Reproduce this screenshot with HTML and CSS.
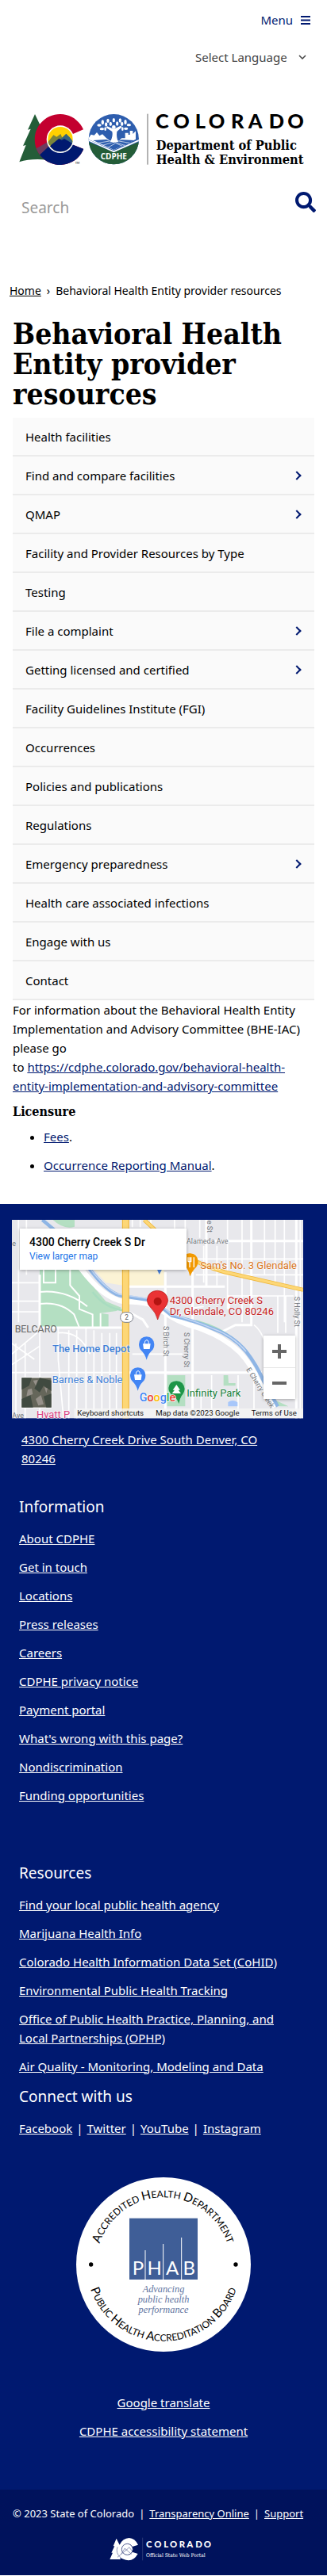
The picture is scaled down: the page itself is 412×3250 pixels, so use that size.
FILE: index.html
```html
<!DOCTYPE html>
<html lang="en">
<head>
<meta charset="utf-8">
<meta name="viewport" content="width=device-width, initial-scale=1">
<title>Behavioral Health Entity provider resources</title>
<link rel="stylesheet" href="styles.css">
</head>
<body>
<header class="site-header">
  <button class="menu-button" type="button">Menu
    <svg class="menu-icon" viewBox="0 0 12 11" aria-hidden="true"><path d="M0 1h12M0 5.500h12M0 10h12" stroke="currentColor" stroke-width="1.900"/></svg>
  </button>
  <div class="language">
    <select class="language-select" aria-label="Select Language"><option>Select Language</option></select>
    <svg class="language-icon" viewBox="0 0 10 6" aria-hidden="true"><path d="M1 1l4 4 4-4" fill="none" stroke="currentColor" stroke-width="1.500"/></svg>
  </div>
  <a class="brand" href="#" aria-label="Colorado Department of Public Health and Environment">
    <svg class="brand-logo" viewBox="75 430 1095 202">
      <defs>
        <clipPath id="c-shape"><path d="M318 491A96 96 0 1 0 319 565L272 546A44 44 0 1 1 272 511Z"/></clipPath>
        <clipPath id="c-core"><circle cx="231" cy="528" r="47"/></clipPath>
        <clipPath id="seal"><circle cx="433" cy="528" r="95"/></clipPath>
      </defs>
      <path fill="#245d38" d="M135 433L108 492L119 489L90 553L101 550L76 614Q120 600 180 606L180 505L162 490Z"/>
      <g clip-path="url(#c-shape)">
        <rect x="130" y="430" width="195" height="200" fill="#c3002f"/>
        <path fill="#6d3a5d" d="M130 568L184 538L200 565L150 605L130 600Z"/>
        <path fill="#001970" d="M152 588L195 548L330 538V630H152Z"/>
      </g>
      <circle cx="231" cy="528" r="52" fill="#fff"/>
      <g clip-path="url(#c-core)">
        <rect x="180" y="475" width="102" height="106" fill="#ffd100"/>
        <path fill="#7a853b" d="M175 550L205 512L217 519L232 508L250 550Z"/>
        <path fill="#35647e" d="M218 540L253 507L266 520L290 550V580H200Z"/>
        <path fill="#001970" d="M178 565L226 525L236 531L246 526L286 550V582H178Z"/>
      </g>
      <text x="287" y="621" font-family="Lato" font-size="11">TM</text>
      <g clip-path="url(#seal)">
        <rect x="335" y="430" width="196" height="198" fill="#2e5eae"/>
        <path fill="#fff" d="M335 528L347 510L359 513L369 502L379 515L390 509L405 524L420 535L452 535L463 524H476V504H488V511H494V496H505V508L516 497V528L433 569Z"/>
        <path fill="#2e5eae" d="M355 532L405 529L433 541L463 530L510 532L433 568Z"/>
        <path stroke="#fff" stroke-width="2" fill="none" d="M375 542L435 532L492 542M390 551L436 538L476 552M410 560L440 543L464 553"/>
        <path fill="#245d38" d="M335 537L433 577L531 537V628H335Z"/>
        <path d="M336 531L433 575L530 531" fill="none" stroke="#fff" stroke-width="5"/>
        <path fill="#fff" d="M420 538Q431 515 427 499L404 484L408 479L429 488H437L459 477L464 482L445 499Q442 521 450 538Z"/>
        <circle cx="433" cy="482" r="7" fill="#fff"/>
        <g fill="#fff">
          <ellipse cx="378" cy="475" rx="8" ry="5"/><ellipse cx="388" cy="489" rx="8" ry="5"/><ellipse cx="391" cy="464" rx="5" ry="9"/><ellipse cx="404" cy="472" rx="5" ry="8"/><ellipse cx="411" cy="458" rx="5" ry="8"/><ellipse cx="421" cy="470" rx="5" ry="8"/><ellipse cx="433" cy="456" rx="5" ry="8"/><ellipse cx="446" cy="469" rx="5" ry="8"/><ellipse cx="457" cy="457" rx="5" ry="8"/><ellipse cx="464" cy="470" rx="5" ry="8"/><ellipse cx="477" cy="463" rx="5" ry="9"/><ellipse cx="490" cy="474" rx="8" ry="5"/><ellipse cx="479" cy="488" rx="8" ry="5"/><ellipse cx="401" cy="489" rx="4" ry="7"/><ellipse cx="466" cy="489" rx="4" ry="7"/>
        </g>
        <text x="433" y="603" text-anchor="middle" font-family="Open Sans" font-weight="700" font-size="30" fill="#fff">CDPHE</text>
      </g>
      <path d="M561 432V624" stroke="#666" stroke-width="3"/>
      <text class="logo-word" font-size="76" y="487" x="591 658 740 791 876 941 1019 1090">COLORADO</text>
      <text class="logo-slab" font-size="49" x="593" y="568">Department of Public</text>
      <text class="logo-slab" font-size="49" x="593" y="622">Health &amp; Environment</text>
    </svg>
  </a>
  <form class="search">
    <input class="search-input" type="search" placeholder="Search" aria-label="Search">
    <button class="search-button" type="submit" aria-label="Search">
      <svg class="search-icon" viewBox="0 0 512 512"><path fill="currentColor" d="M505 442.700L405.300 343c-4.500-4.500-10.600-7-17-7H372c27.600-35.300 44-79.700 44-128C416 93.100 322.900 0 208 0S0 93.100 0 208s93.100 208 208 208c48.300 0 92.700-16.400 128-44v16.300c0 6.400 2.500 12.500 7 17l99.700 99.700c9.400 9.400 24.600 9.400 33.900 0l28.300-28.300c9.400-9.400 9.400-24.600.1-34zM208 336c-70.700 0-128-57.200-128-128 0-70.700 57.200-128 128-128 70.700 0 128 57.200 128 128 0 70.700-57.200 128-128 128z"/></svg>
    </button>
  </form>
</header>

<nav class="breadcrumb" aria-label="Breadcrumb"><a href="#">Home</a><span>›</span><span>Behavioral Health Entity provider resources</span></nav>

<main class="content">
  <h1 class="page-title">Behavioral Health Entity provider resources</h1>
  <nav aria-label="Section">
    <ul class="side-menu">
      <li><a href="#">Health facilities</a></li>
      <li class="has-children"><a href="#">Find and compare facilities</a></li>
      <li class="has-children"><a href="#">QMAP</a></li>
      <li><a href="#">Facility and Provider Resources by Type</a></li>
      <li><a href="#">Testing</a></li>
      <li class="has-children"><a href="#">File a complaint</a></li>
      <li class="has-children"><a href="#">Getting licensed and certified</a></li>
      <li><a href="#">Facility Guidelines Institute (FGI)</a></li>
      <li><a href="#">Occurrences</a></li>
      <li><a href="#">Policies and publications</a></li>
      <li><a href="#">Regulations</a></li>
      <li class="has-children"><a href="#">Emergency preparedness</a></li>
      <li><a href="#">Health care associated infections</a></li>
      <li><a href="#">Engage with us</a></li>
      <li><a href="#">Contact</a></li>
    </ul>
  </nav>
  <p class="intro">For information about the Behavioral Health Entity Implementation and Advisory Committee (BHE-IAC) please go<br>to&nbsp;<a href="#">https://cdphe.colorado.gov/behavioral-health-entity-implementation-and-advisory-committee</a></p>
  <h2 class="section-title">Licensure</h2>
  <ul class="doc-list">
    <li><a href="#">Fees</a>.</li>
    <li><a href="#">Occurrence Reporting Manual</a>.</li>
  </ul>
</main>

<footer class="site-footer">
  <div class="map">
    <svg class="map-canvas" viewBox="45 92 1101 751" role="img" aria-label="Map of 4300 Cherry Creek S Dr">
      <rect x="45" y="92" width="1101" height="751" fill="#e8e8ec"/>
      <path fill="#fbf3d5" d="M360 270H620V345H490L400 330L355 280Z"/>
      <path fill="#b4dfc2" d="M200 92H282V118Q240 130 200 92ZM150 280H310L340 330L400 400L460 425L440 437L380 445L410 450V500H150Z"/>
      <path stroke="#fff" stroke-width="6" fill="none" d="M150 365Q250 355 330 420M150 410Q230 400 280 450L300 500M210 280V330H165V280M265 280V340L300 380V430L350 450V500M380 445V500"/>
      <g stroke="#fff" fill="none" stroke-width="5">
        <path d="M70 92V480M100 92V300M45 330H150M45 400H150M45 440H150M60 560V843M95 560V843M150 500V843M45 600L140 520M45 640L150 570M45 560L130 620M220 500V620L240 843M260 510V843M290 510V843M325 500V843M355 510V843M385 520V843M415 520V843M440 520V843M220 520Q300 510 340 600M500 92V120M530 92V120M570 92V120M660 92V130M700 92V130M755 92V160M770 190V330M820 190V340M860 92V430M915 92V480M1000 92V300M1040 92V340M1075 92V480M1135 92V843M720 240H1146M740 300H1146M860 380H1110M760 740V843M800 680V843M900 680V843M960 680V843M1050 380V520M1080 380V520M45 670H470M500 600H690M700 430L770 420"/>
        <path stroke-width="9" d="M690 172H1146M780 92V340M728 290V843M625 290V843M480 345H850M480 670H990M865 380V430M950 92V300V490H890L840 515M1120 92V843M150 300V500H460M485 440L540 470L560 500"/>
        <path d="M960 490Q1000 520 1010 600L1100 700"/>
      </g>
      <path fill="#b4dfc2" d="M632 680H700V798H632ZM845 680H862L864 710H890V720H845ZM1010 760L1090 798H1050Z"/>
      <path fill="#a8c7fa" d="M862 782Q880 770 898 783V798H862Z"/>
      <path fill="none" stroke="#a8dcc0" stroke-width="8" d="M350 365Q400 430 470 435M740 475Q860 505 930 590Q970 640 990 690"/>
      <path fill="none" stroke="#fff" stroke-width="19" d="M305 275Q390 390 470 402Q570 400 610 435Q670 480 740 498Q840 530 905 592Q950 640 975 700L1040 800"/>
      <path fill="none" stroke="#8eb5e5" stroke-width="13" d="M160 92L205 130L340 280Q400 360 450 378Q530 390 580 398L650 455Q740 475 800 502Q880 530 930 590Q970 640 1000 710L1050 798"/>
      <path fill="none" stroke="#c5d8f4" stroke-width="4" d="M345 282Q400 355 450 374Q530 385 580 394L650 450Q740 475 800 502Q880 530 930 590"/>
      <path fill="none" stroke="#f0b93e" stroke-width="27" d="M475 92V843"/>
      <path fill="none" stroke="#fdd776" stroke-width="20" d="M475 92V843"/>
      <path fill="none" stroke="#f0b93e" stroke-width="15" d="M545 92Q600 140 650 195Q740 260 850 290L1146 357"/>
      <path fill="none" stroke="#fdd776" stroke-width="10" d="M545 92Q600 140 650 195Q740 260 850 290L1146 357"/>
      <rect x="455" y="442" width="48" height="38" rx="18" fill="#fff" stroke="#777c88" stroke-width="3"/>
      <text x="479" y="471" font-size="25" text-anchor="middle" fill="#555">2</text>
      <g fill="#70757a" font-size="27">
        <text x="705" y="183">Alameda Ave</text>
        <text transform="translate(784 94) rotate(90)" x="0" y="0">e St</text>
        <text transform="translate(1114 382) rotate(90)" x="0" y="0">S Holly St</text>
        <text transform="translate(619 494) rotate(90)" x="0" y="0">S Birch St</text>
        <text transform="translate(697 518) rotate(90)" x="0" y="0">S Cherry St</text>
        <text transform="translate(930 658) rotate(58)" x="0" y="0">E Cherry Creek</text>
        <text x="46" y="192">e</text><text x="46" y="841">Ave</text>
      </g>
      <text x="56" y="518" font-size="37" fill="#666">BELCARO</text>
      <path fill="#4a80d8" d="M594 280H612L602 299Z"/>
      <path fill="#f29900" d="M718 306Q713 280 699 267V225Q710 217 720 219Q748 222 749 250Q748 267 735 278Q724 290 718 306Z"/>
      <path d="M711 234V250M717 234V272M711 250H722V234M733 234V272" stroke="#fff" stroke-width="4" fill="none"/>
      <text x="757" y="279" font-size="39" class="map-label" fill="#d9741a">Sam's No. 3 Glendale</text>
      <path fill="#ea3335" stroke="#b31412" stroke-width="2" d="M596 470Q589 443 572 427Q556 412 556 396Q560 361 595 360Q631 362 635 397Q634 413 618 430Q602 446 596 470Z"/>
      <circle cx="596" cy="401" r="15" fill="#b31412"/>
      <g font-size="39" class="map-label" fill="#c5221f"><text x="641" y="410">4300 Cherry Creek S</text><text x="641" y="452">Dr, Glendale, CO 80246</text></g>
      <g class="map-label" font-size="39" fill="#3f80d6"><text class="strong-label" x="198" y="593">The Home Depot</text><text x="197" y="710">Barnes &amp; Noble</text></g>
      <g id="shop-pin"><path fill="#4285f4" d="M554 622Q548 600 535 588Q525 578 525 563Q528 535 554 534Q581 536 583 563Q583 579 573 588Q559 602 554 622Z"/><path d="M540 561H569L566 581H543Z" fill="#fff"/><path d="M547 561Q547 547 555 547Q562 547 562 561" stroke="#fff" stroke-width="3" fill="none"/></g>
      <use href="#shop-pin" x="-33" y="117"/>
      <path fill="#1e9648" d="M676 788Q669 765 651 755Q637 745 637 728Q640 703 667 702Q695 704 698 732Q696 749 686 759Q679 769 676 788Z"/>
      <path fill="#fff" d="M667 716L681 736H674L684 749H650L660 736H653Z"/>
      <text x="706" y="762" class="map-label" font-size="39" fill="#18813c">Infinity Park</text>
      <text x="527" y="778" font-size="43" class="google-word"><tspan fill="#4285f4">G</tspan><tspan fill="#ea4335">o</tspan><tspan fill="#fbbc04">o</tspan><tspan fill="#4285f4">g</tspan><tspan fill="#34a853">l</tspan><tspan fill="#ea4335">e</tspan></text>
      <text x="138" y="842" class="map-label" font-size="39" fill="#db3f80">Hyatt P</text>
      <path d="M280 806H1146V843H280Z" fill="#f5f5f5" fill-opacity=".8"/>
      <g font-size="29" fill="#111"><text x="292" y="833">Keyboard shortcuts</text><text x="589" y="833">Map data ©2023 Google</text><text x="950" y="833">Terms of Use</text></g>
      <rect x="79" y="687" width="118" height="118" rx="5" fill="#fff"/>
      <rect x="82" y="690" width="112" height="112" fill="#65665a"/>
      <path fill="#404a40" d="M82 690H120L110 720L82 735ZM130 730L150 690L194 700V740L165 720L150 745ZM82 770L115 755L125 802H82ZM165 760L194 750V802H175Z"/>
      <path fill="#96918a" d="M125 700L143 698L135 720ZM105 735L120 730L124 752L100 760ZM135 770L155 755L165 790L145 795ZM168 725L180 730L175 748Z"/>
    </svg>
    <div class="map-card"><strong>4300 Cherry Creek S Dr</strong><a href="#">View larger map</a></div>
    <div class="map-zoom">
      <button type="button" aria-label="Zoom in"><svg viewBox="0 0 18 18"><path d="M0 9h18M9 0v18" stroke="#666" stroke-width="4"/></svg></button>
      <button type="button" aria-label="Zoom out"><svg viewBox="0 0 18 18"><path d="M0 9h18" stroke="#666" stroke-width="4"/></svg></button>
    </div>
  </div>
  <p class="address"><a href="#">4300 Cherry Creek Drive South Denver, CO 80246</a></p>

  <section class="footer-group information">
    <h2>Information</h2>
    <ul>
      <li><a href="#">About CDPHE</a></li>
      <li><a href="#">Get in touch</a></li>
      <li><a href="#">Locations</a></li>
      <li><a href="#">Press releases</a></li>
      <li><a href="#">Careers</a></li>
      <li><a href="#">CDPHE privacy notice</a></li>
      <li><a href="#">Payment portal</a></li>
      <li><a href="#">What's wrong with this page?</a></li>
      <li><a href="#">Nondiscrimination</a></li>
      <li><a href="#">Funding opportunities</a></li>
    </ul>
  </section>
  <section class="footer-group">
    <h2>Resources</h2>
    <ul>
      <li><a href="#">Find your local public health agency</a></li>
      <li><a href="#">Marijuana Health Info</a></li>
      <li><a href="#">Colorado Health Information Data Set (CoHID)</a></li>
      <li><a href="#">Environmental Public Health Tracking</a></li>
      <li><a href="#">Office of Public Health Practice, Planning, and Local Partnerships (OPHP)</a></li>
      <li><a href="#">Air Quality - Monitoring, Modeling and Data</a></li>
    </ul>
  </section>
  <section class="footer-group">
    <h2>Connect with us</h2>
    <p class="social"><a href="#">Facebook</a><span>|</span><a href="#">Twitter</a><span>|</span><a href="#">YouTube</a><span>|</span><a href="#">Instagram</a></p>
  </section>

  <svg class="phab" viewBox="108 86 660 660" role="img" aria-label="PHAB accredited health department">
    <defs>
      <path id="arc-top" d="M188 371A254 254 0 0 1 688 371"/>
      <path id="arc-bottom" d="M150 457A291 291 0 0 0 726 457"/>
    </defs>
    <circle cx="438" cy="416" r="330" fill="#fff"/>
    <g class="phab-ring" font-size="36">
      <text text-anchor="middle"><textPath href="#arc-top" startOffset="50%"><tspan font-size="46">A</tspan>CCREDITED <tspan font-size="46">H</tspan>EALTH <tspan font-size="46">D</tspan>EPARTMENT</textPath></text>
      <text text-anchor="middle"><textPath href="#arc-bottom" startOffset="50%"><tspan font-size="46">P</tspan>UBLIC <tspan font-size="46">H</tspan>EALTH <tspan font-size="46">A</tspan>CCREDITATION <tspan font-size="46">B</tspan>OARD</textPath></text>
    </g>
    <circle cx="164" cy="416" r="8"/><circle cx="711" cy="416" r="8"/>
    <rect x="309" y="241" width="258" height="232" fill="#3f5e97"/>
    <path d="M369 362V473M437 338V473M506 314V473" stroke="#fff" stroke-width="3"/>
    <g font-family="Lato" font-size="72" fill="#fff" text-anchor="middle"><text x="342" y="454">P</text><text x="404" y="454">H</text><text x="471" y="454">A</text><text x="535" y="454">B</text></g>
    <g class="phab-motto" font-size="37" text-anchor="middle" fill="#5f759f"><text x="438" y="522">Advancing</text><text x="438" y="560">public health</text><text x="438" y="598">performance</text></g>
  </svg>

  <ul class="footer-links">
    <li><a href="#">Google translate</a></li>
    <li><a href="#">CDPHE accessibility statement</a></li>
  </ul>
  <div class="legal">
    <p class="legal-line"><span>© 2023 State of Colorado</span><span>|</span><a href="#">Transparency Online</a><span>|</span><a href="#">Support</a></p>
    <svg class="portal-logo" viewBox="458 668 408 90" role="img" aria-label="Colorado Official State Web Portal">
      <path fill="#fff" d="M484 673L496 697Q508 672 532 671Q554 672 566 697L544 704A20 20 0 1 0 544 724L565 731Q551 756 530 756Q508 753 497 744L500 752H459L470 727H465L477 702H472Z"/>
      <circle cx="525" cy="714" r="21" fill="#fff" stroke="#00125c" stroke-width="2"/>
      <path d="M502 732L516 710L522 717L532 706L545 722M488 744L522 716L541 732M488 705Q480 728 499 744" fill="none" stroke="#5c6596" stroke-width="2"/>
      <path d="M583 670V756" stroke="#8089ae" stroke-width="1"/>
      <text class="logo-word" fill="#fff" font-size="34" y="708" x="596 627 663 686 721 750 783 814">COLORADO</text>
      <text class="portal-slab" fill="#fff" x="596" y="743">Official State Web Portal</text>
    </svg>
  </div>
</footer>
</body>
</html>
```
FILE: styles.css
```css
* { box-sizing: border-box; }
body {
  margin: 0;
  background: #fff;
  color: #000;
  font-family: "Noto Sans", sans-serif;
  font-size: 15px;
  line-height: 24px;
}
ul { list-style: none; margin: 0; padding: 0; }
p, h1, h2 { margin: 0; }
svg { display: block; }
button { border: 0; padding: 0; background: none; font: inherit; cursor: pointer; }

.site-header { display: flex; flex-direction: column; padding: 13px 14px 0 24px; }
.menu-button { display: flex; align-items: center; align-self: flex-end; gap: 10px; margin-right: 7px; color: #001970; }
.menu-icon { width: 12px; height: 11px; }
.language { display: flex; align-items: center; justify-content: flex-end; gap: 14px; height: 24px; margin: 23px 12px 0 0; color: #444; }
.language-select { appearance: none; border: 0; padding: 0; background: none; color: inherit; font: inherit; }
.language-icon { width: 10px; height: 6px; }
.brand { display: block; margin-top: 59px; }
.brand-logo { width: 365px; max-width: 100%; height: auto; overflow: visible; }
.logo-word { font-family: "Lato", sans-serif; font-weight: 900; }
.logo-slab { font-family: "DejaVu Serif Condensed", "DejaVu Serif", serif; font-weight: 700; }
.search { display: flex; justify-content: space-between; align-items: center; margin-top: 32px; }
.search-input { flex: 1; min-width: 0; height: 40px; border: 0; padding: 0 3px; background: none; font: inherit; font-size: 19px; }
.search-input::placeholder { color: #999; opacity: 1; }
.search-button { align-self: flex-start; color: #001970; }
.search-icon { width: 26px; height: 26px; }

.breadcrumb { display: flex; gap: 7px; padding: 73px 12px 0; font-size: 14px; }
.breadcrumb a { color: inherit; }
.content { padding: 23px 16px 37px; }
.page-title { margin-bottom: 11px; font-family: "DejaVu Serif Condensed", "DejaVu Serif", serif; font-size: 37px; line-height: 38px; }
.side-menu li { display: flex; align-items: center; justify-content: space-between; height: 49px; padding: 0 18px 0 16px; background: #fafafa; border-bottom: 2px solid #ebebeb; }
.side-menu a { flex: 1; color: #000; text-decoration: none; }
.has-children::after { content: ""; width: 6px; height: 6px; border: solid #001970; border-width: 2px 2px 0 0; transform: rotate(45deg); }
.intro a, .doc-list a { color: #001970; }
.section-title { margin-top: 9px; font-family: "DejaVu Serif Condensed", "DejaVu Serif", serif; font-size: 16px; line-height: 24px; }
.doc-list { display: grid; gap: 12px; margin-top: 7px; padding-left: 39px; list-style: disc; }

.site-footer { padding-top: 20px; background: #001970; color: #fff; }
.site-footer a { color: inherit; }
.map { position: relative; margin: 0 30px 0 15px; overflow: hidden; font-family: "Roboto", sans-serif; }
.map-canvas { width: 100%; height: auto; }
.map-label { font-weight: 400; paint-order: stroke; stroke: #fff; stroke-width: 4px; stroke-opacity: .7; }
.strong-label { font-weight: 500; }
.google-word { font-weight: 500; paint-order: stroke; stroke: #fff; stroke-width: 4px; }
.map-card { position: absolute; left: 10px; top: 11px; display: flex; flex-direction: column; width: 210px; padding: 8px 12px; background: #fff; color: #000; font-size: 14px; line-height: 18px; box-shadow: 0 1px 4px rgba(0, 0, 0, .3); }
.map-card strong { font-weight: 500; }
.map-card a { color: #1a73e8; font-size: 12px; text-decoration: none; }
.map-zoom { position: absolute; right: 10px; bottom: 25px; display: grid; width: 40px; background: #fff; box-shadow: 0 1px 4px rgba(0, 0, 0, .3); }
.map-zoom button { display: grid; place-items: center; height: 40px; }
.map-zoom button + button { border-top: 1px solid #e6e6e6; }
.map-zoom svg { width: 18px; height: 18px; }
.address { margin: 14px 50px 0 27px; }
.footer-group { padding: 12px 40px 0 24px; }
.footer-group h2 { font-size: 19px; font-weight: 400; line-height: 28px; }
.footer-group ul { display: grid; gap: 12px; margin-top: 14px; }
.information { padding-top: 35px; padding-bottom: 60px; }
.social { display: flex; gap: 5px; margin-top: 14px; }
.phab { width: 220px; height: auto; margin: 50px auto 0; }
.phab-ring { font-family: "Lato", sans-serif; font-weight: 400; }
.phab-motto { font-family: "Liberation Serif", serif; font-style: italic; }
.footer-links { display: grid; gap: 12px; margin-top: 52px; padding-bottom: 62px; text-align: center; }
.legal { padding: 18px 16px; background: #00125c; font-size: 13px; }
.legal-line { display: flex; gap: 6px; }
.portal-logo { width: 136px; height: 30px; margin: 18px auto 0; overflow: visible; }
.portal-slab { font-family: "DejaVu Serif Condensed", "DejaVu Serif", serif; font-size: 20px; }
```
